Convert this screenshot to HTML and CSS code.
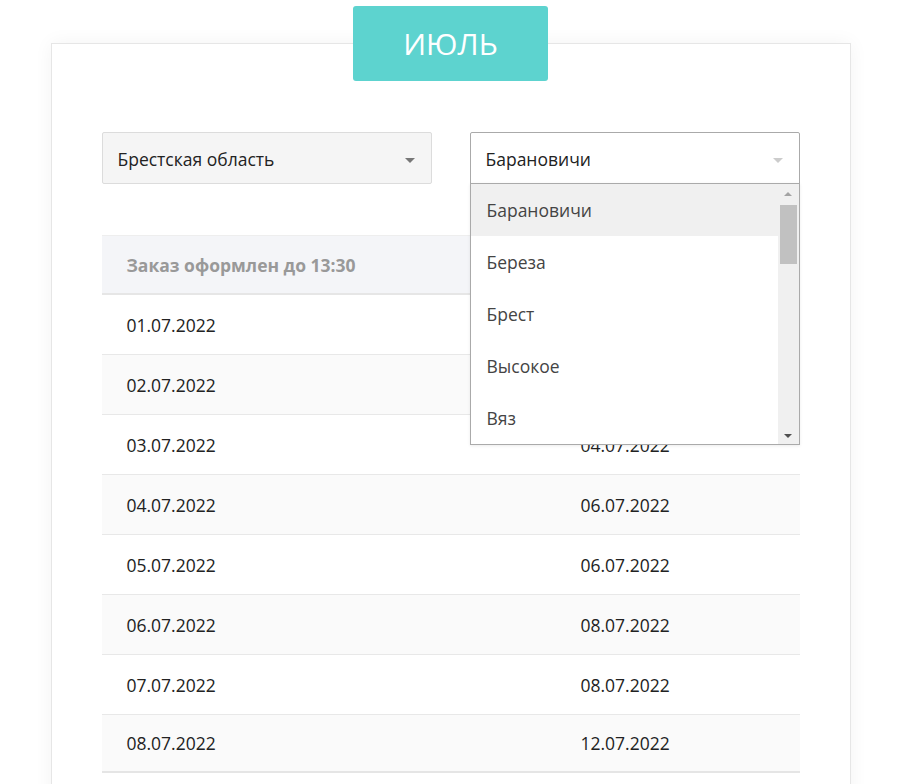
FILE: index.html
```html
<!DOCTYPE html>
<html lang="ru">
<head>
<meta charset="utf-8">
<title>Доставка — Июль</title>
<link rel="stylesheet" href="styles.css">
</head>
<body>
<div class="page">
  <div class="month">ИЮЛЬ</div>
  <div class="card">
    <div class="filters">
      <div class="select select-region">
        <span class="select-value">Брестская область</span>
        <span class="caret"></span>
      </div>
      <div class="select-wrap">
        <div class="select select-city">
          <span class="select-value">Барановичи</span>
          <span class="caret caret-light"></span>
        </div>
        <div class="dropdown">
          <ul class="options">
            <li class="option active">Барановичи</li>
            <li class="option">Береза</li>
            <li class="option">Брест</li>
            <li class="option">Высокое</li>
            <li class="option">Вяз</li>
          </ul>
          <div class="scrollbar">
            <span class="sb-up"></span>
            <span class="sb-thumb"></span>
            <span class="sb-down"></span>
          </div>
        </div>
      </div>
    </div>
    <div class="table">
      <div class="row head">
        <div class="cell c1">Заказ оформлен до 13:30</div>
        <div class="cell c2">Дата доставки</div>
      </div>
      <div class="row"><div class="cell c1">01.07.2022</div><div class="cell c2">04.07.2022</div></div>
      <div class="row alt"><div class="cell c1">02.07.2022</div><div class="cell c2">04.07.2022</div></div>
      <div class="row"><div class="cell c1">03.07.2022</div><div class="cell c2">04.07.2022</div></div>
      <div class="row alt"><div class="cell c1">04.07.2022</div><div class="cell c2">06.07.2022</div></div>
      <div class="row"><div class="cell c1">05.07.2022</div><div class="cell c2">06.07.2022</div></div>
      <div class="row alt"><div class="cell c1">06.07.2022</div><div class="cell c2">08.07.2022</div></div>
      <div class="row"><div class="cell c1">07.07.2022</div><div class="cell c2">08.07.2022</div></div>
      <div class="row alt last"><div class="cell c1">08.07.2022</div><div class="cell c2">12.07.2022</div></div>
    </div>
  </div>
</div>
</body>
</html>
```

FILE: styles.css
```css
* { box-sizing: border-box; }
html, body { margin: 0; padding: 0; background: #fff; }
body {
  font-family: "Open Sans", "Noto Sans", sans-serif;
  font-size: 17.5px;
  color: #222;
  overflow: hidden;
}
.page {
  display: flex;
  flex-direction: column;
  align-items: center;
  padding: 6px 0 0 3px;
}
.month {
  position: relative;
  z-index: 2;
  width: 195px;
  height: 75px;
  margin-bottom: -38px;
  background: #5dd3cf;
  border-radius: 3px;
  color: #fff;
  font-size: 30px;
  font-weight: 400;
  line-height: 75px;
  text-align: center;
}
.card {
  width: 800px;
  border: 1px solid #e6e6e6;
  background: #fff;
  box-shadow: 0 0 18px rgba(0, 0, 0, 0.05);
  padding: 88px 50px 40px;
  min-height: 900px;
}
.filters {
  display: flex;
  justify-content: space-between;
  position: relative;
  z-index: 3;
}
.select {
  position: relative;
  width: 330px;
  height: 52px;
  padding: 0 15px;
  display: flex;
  align-items: center;
  border: 1px solid #dcdcdc;
  border-radius: 2px;
  background: #f5f5f5;
  color: #222;
}
.select-value { position: relative; top: 1px; }
.select-wrap { position: relative; width: 330px; }
.select-city {
  background: #fff;
  border-color: #aaa;
  border-radius: 2px 2px 0 0;
  padding-left: 15px;
}
.caret {
  position: absolute;
  right: 16px;
  top: 25px;
  width: 0;
  height: 0;
  border-left: 5px solid transparent;
  border-right: 5px solid transparent;
  border-top: 5px solid #777;
}
.caret-light { border-top-color: #ccc; }
.dropdown {
  position: absolute;
  left: 0;
  top: 51px;
  width: 330px;
  height: 262px;
  border: 1px solid #aaa;
  background: #fff;
  box-shadow: 0 1px 3px rgba(0, 0, 0, 0.08);
  display: flex;
  overflow: hidden;
}
.options {
  list-style: none;
  margin: 0;
  padding: 0;
  flex: 1;
}
.option {
  height: 52px;
  padding: 0 16px;
  display: flex;
  align-items: center;
  color: #444;
}
.option.active { background: #f0f0f0; }
.scrollbar {
  position: relative;
  width: 21px;
  background: #f0f0f0;
  flex: none;
}
.sb-up, .sb-down {
  position: absolute;
  left: 6px;
  width: 0;
  height: 0;
  border-left: 4px solid transparent;
  border-right: 4px solid transparent;
}
.sb-up { top: 8px; border-bottom: 4px solid #a3a3a3; }
.sb-down { bottom: 6px; border-top: 4px solid #505050; }
.sb-thumb {
  position: absolute;
  left: 2px;
  top: 21px;
  width: 17px;
  height: 59px;
  background: #c1c1c1;
}
.table { margin-top: 51px; }
.row {
  display: flex;
  align-items: center;
  height: 60px;
  border-bottom: 1px solid #e8e8e8;
  background: #fff;
}
.row.alt { background: #fafafa; }
.row.last { border-bottom: 2px solid #e5e5e5; height: 58px; }
.row.head {
  background: #f4f5f8;
  border-top: 1px solid #eeeeee;
  border-bottom: 2px solid #e6e6e6;
  font-weight: 700;
  color: #999;
}
.cell { padding-left: 25px; }
.c1 { width: 454px; flex: none; }
.c2 { flex: 1; }
```
